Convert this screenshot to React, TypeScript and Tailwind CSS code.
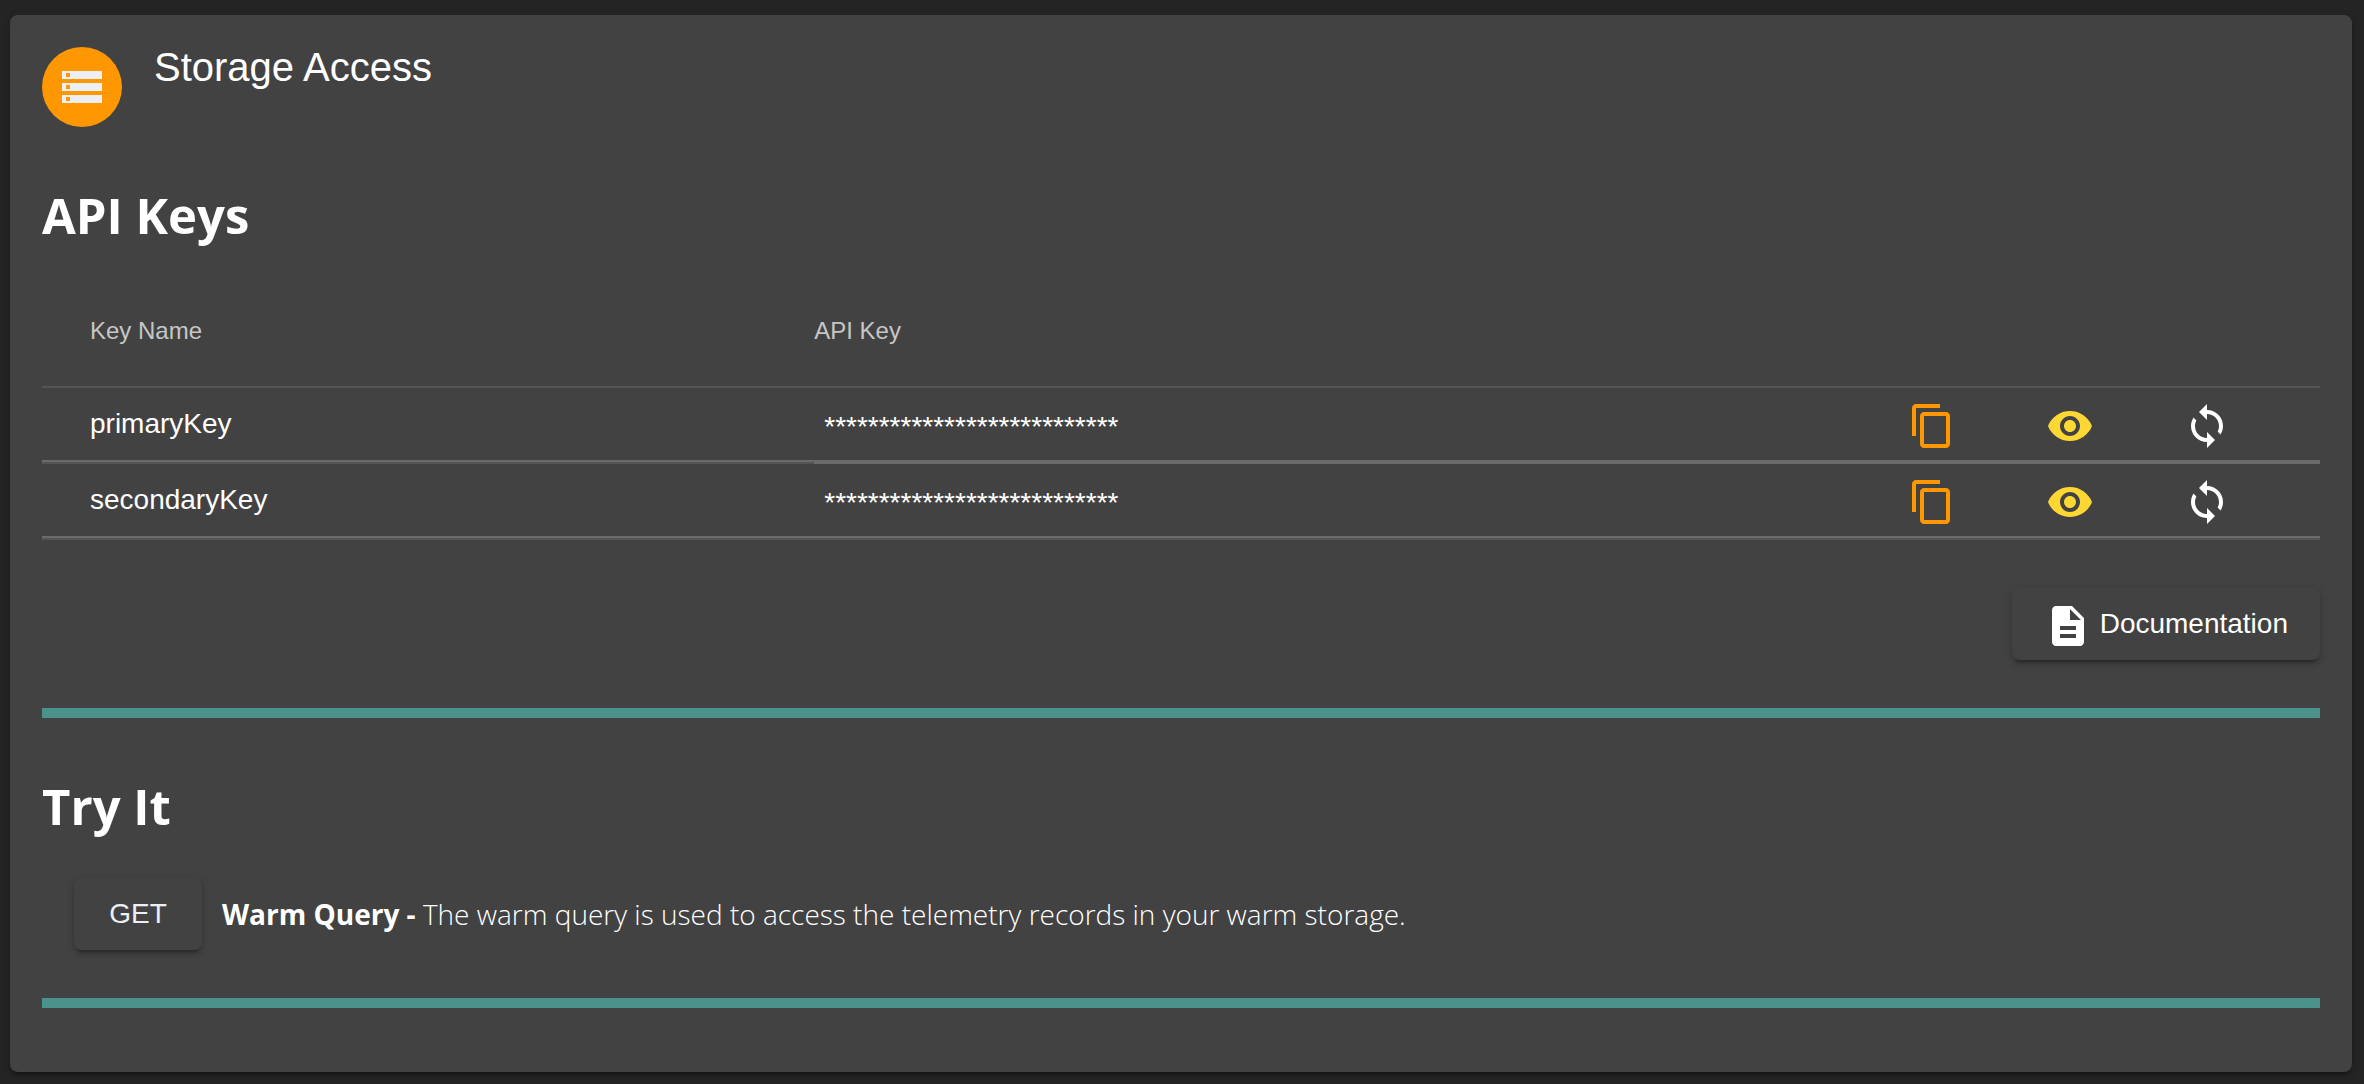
import React from "react";

const PATHS = {
  storage:
    "M2 20h20v-4H2v4zm2-3h2v2H4v-2zM2 4v4h20V4H2zm4 3H4V5h2v2zm-4 7h20v-4H2v4zm2-3h2v2H4v-2z",
  copy: "M16 1H4c-1.1 0-2 .9-2 2v14h2V3h12V1zm3 4H8c-1.1 0-2 .9-2 2v14c0 1.1.9 2 2 2h11c1.1 0 2-.9 2-2V7c0-1.1-.9-2-2-2zm0 16H8V7h11v14z",
  eye: "M12 4.5C7 4.5 2.73 7.61 1 12c1.73 4.39 6 7.5 11 7.5s9.27-3.11 11-7.5c-1.73-4.39-6-7.5-11-7.5zM12 17c-2.76 0-5-2.24-5-5s2.24-5 5-5 5 2.24 5 5-2.24 5-5 5zm0-8c-1.66 0-3 1.34-3 3s1.34 3 3 3 3-1.34 3-3-1.34-3-3-3z",
  sync: "M12 4V1L8 5l4 4V6c3.31 0 6 2.69 6 6 0 1.01-.25 1.97-.7 2.8l1.46 1.46C19.54 15.03 20 13.57 20 12c0-4.42-3.58-8-8-8zm0 14c-3.31 0-6-2.69-6-6 0-1.01.25-1.97.7-2.8L5.24 7.74C4.46 8.97 4 10.43 4 12c0 4.42 3.58 8 8 8v3l4-4-4-4v3z",
  doc: "M14 2H6c-1.1 0-1.99.9-1.99 2L4 20c0 1.1.89 2 1.99 2H18c1.1 0 2-.9 2-2V8l-6-6zm2 16H8v-2h8v2zm0-4H8v-2h8v2zm-3-5V3.5L18.5 9H13z",
};

function Icon({ name }: { name: keyof typeof PATHS }) {
  return (
    <svg viewBox="0 0 24 24" className="size-12 shrink-0 fill-current" aria-hidden="true">
      <path d={PATHS[name]} />
    </svg>
  );
}

const RAISED =
  "shadow-[0_6px_2px_-4px_rgba(0,0,0,0.2),0_4px_4px_0_rgba(0,0,0,0.14),0_2px_10px_0_rgba(0,0,0,0.12)]";

const MASK = "*".repeat(27);

const ACTIONS = [
  { icon: "copy", label: "Copy", color: "text-[#ff9800]" },
  { icon: "eye", label: "Show", color: "text-[#fdd835]" },
  { icon: "sync", label: "Regenerate", color: "text-white" },
] as const;

function KeyRow({ name, last }: { name: string; last?: boolean }) {
  const line = last ? "border-b-[#555555]" : "border-b-[#6b6b6b]";
  const inner = "flex h-[74px] items-center border-b-2 border-[#6b6b6b]";
  return (
    <tr>
      <td className="border-b-2 border-b-[#555555] p-0">
        <div className={`${inner} pl-12`}>{name}</div>
      </td>
      <td className={`border-b-2 p-0 ${line}`}>
        <div className={inner}>
          <input
            type="text"
            readOnly
            value={MASK}
            aria-label={`${name} value`}
            className="w-full bg-transparent px-[10px] pt-[6px] text-white outline-none"
          />
        </div>
      </td>
      {ACTIONS.map((a) => (
        <td key={a.icon} className={`border-b-2 p-0 ${line}`}>
          <div className={inner}>
            <button type="button" aria-label={`${a.label} ${name}`} className={`mt-1 ${a.color}`}>
              <Icon name={a.icon} />
            </button>
          </div>
        </td>
      ))}
    </tr>
  );
}

export default function App() {
  return (
    <div className="min-h-screen bg-[#242424] pt-[15px] pr-3 pb-3 pl-[10px] font-['Liberation_Sans',Arial,sans-serif] text-[28px] leading-8 text-white">
      <main className={`rounded-lg bg-[#424242] px-8 pt-8 pb-16 ${RAISED}`}>
        <header className="flex items-start gap-8">
          <div className="flex size-20 items-center justify-center rounded-full bg-[#ff9800] text-[#eceff4]">
            <Icon name="storage" />
          </div>
          <h1 className="text-[40px] leading-10">Storage Access</h1>
        </header>

        <section className="pt-[52px]">
          <h2 className="font-['Open_Sans',sans-serif] text-[49px] leading-[72px] font-bold">
            API Keys
          </h2>
          <table className="mt-[25px] w-full table-fixed border-separate border-spacing-0 text-left">
            <colgroup>
              <col className="w-[33.9%]" />
              <col />
              <col className="w-[138px]" />
              <col className="w-[137px]" />
              <col className="w-[137px]" />
            </colgroup>
            <thead>
              <tr className="h-28 text-[24px] text-[#c6c6c6]">
                <th className="border-b-2 border-[#555555] p-0 pl-12 font-normal">Key Name</th>
                <th className="border-b-2 border-[#555555] p-0 font-normal">API Key</th>
                <td colSpan={3} className="border-b-2 border-[#555555] p-0" />
              </tr>
            </thead>
            <tbody>
              <KeyRow name="primaryKey" />
              <KeyRow name="secondaryKey" last />
            </tbody>
          </table>
          <div className="mt-12 flex justify-end">
            <button type="button" className={`flex h-[72px] items-center gap-2 rounded-lg px-8 ${RAISED}`}>
              <span className="pt-1">
                <Icon name="doc" />
              </span>
              Documentation
            </button>
          </div>
        </section>

        <hr className="mt-12 h-[10px] border-0 bg-[#4b918c]" />

        <section className="pt-[52px] font-['Open_Sans',sans-serif]">
          <h2 className="text-[49px] leading-[72px] font-bold">Try It</h2>
          <div className="mt-9 flex items-center gap-5 pl-8">
            <button
              type="button"
              className={`h-[72px] w-32 rounded-lg font-['Liberation_Sans',Arial,sans-serif] text-[#eceff4] ${RAISED}`}
            >
              GET
            </button>
            <p className="font-light">
              <b className="font-bold">Warm Query - </b>
              The warm query is used to access the telemetry records in your warm storage.
            </p>
          </div>
        </section>

        <hr className="mt-12 h-[10px] border-0 bg-[#4b918c]" />
      </main>
    </div>
  );
}
